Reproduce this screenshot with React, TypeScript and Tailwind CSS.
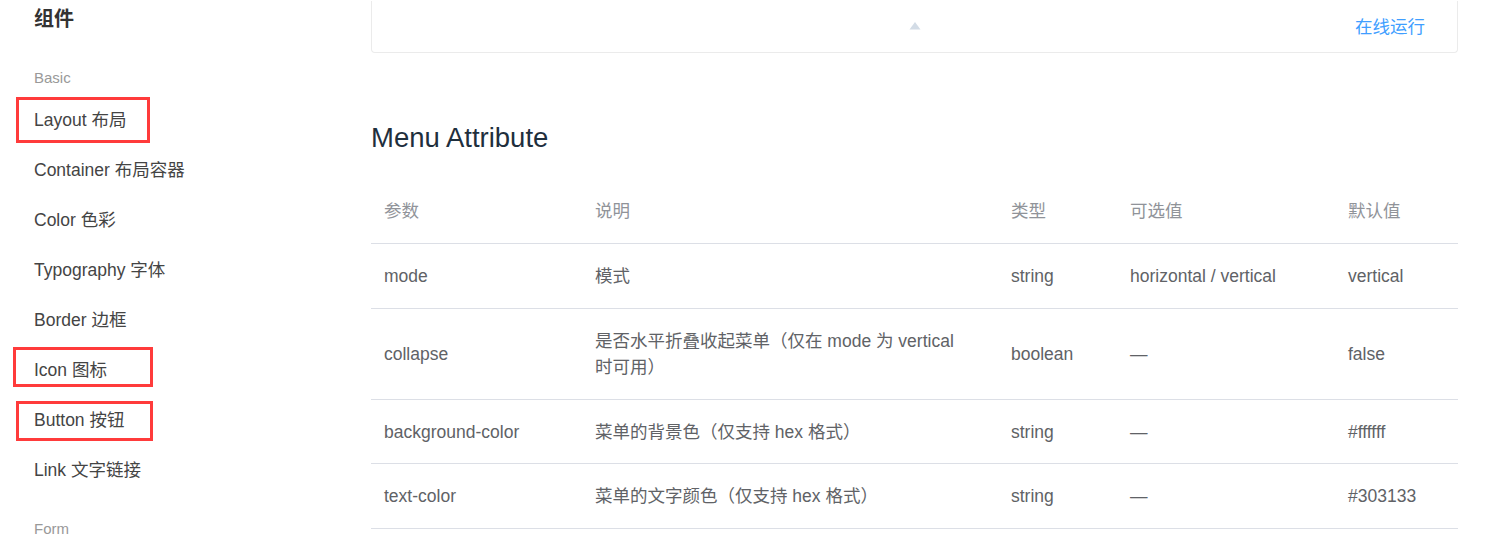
import React from "react";

const font = { fontFamily: '"Liberation Sans", "Noto Sans CJK SC", sans-serif' };

const basic = [
  "Layout 布局",
  "Container 布局容器",
  "Color 色彩",
  "Typography 字体",
  "Border 边框",
  "Icon 图标",
  "Button 按钮",
  "Link 文字链接",
];

type Row = { name: string; desc: React.ReactNode; type: string; options: string; def: string; pad: string };

const rows: Row[] = [
  { name: "mode", desc: "模式", type: "string", options: "horizontal / vertical", def: "vertical", pad: "py-[19px]" },
  {
    name: "collapse",
    desc: (
      <>
        是否水平折叠收起菜单（仅在 mode 为 vertical
        <br />
        时可用）
      </>
    ),
    type: "boolean",
    options: "—",
    def: "false",
    pad: "py-[19px]",
  },
  { name: "background-color", desc: "菜单的背景色（仅支持 hex 格式）", type: "string", options: "—", def: "#ffffff", pad: "pt-[19px] pb-[18px]" },
  { name: "text-color", desc: "菜单的文字颜色（仅支持 hex 格式）", type: "string", options: "—", def: "#303133", pad: "py-[19px]" },
];

function Sidebar() {
  return (
    <aside className="relative w-[371px] shrink-0 pl-[34px]">
      <div className="h-[36px] text-[20px] font-bold leading-[36px] text-[#333]">组件</div>
      <div className="mt-[24px] h-[34px] text-[15px] leading-[33px] text-[#999]">Basic</div>
      <ul>
        {basic.map((item) => (
          <li key={item} className="h-[50px] text-[17.5px] leading-[50px] text-[#444]">
            {item}
          </li>
        ))}
      </ul>
      <div className="mt-[17px] h-[33px] text-[15px] leading-[33px] text-[#999]">Form</div>

      {/* red annotation boxes */}
      <div className="absolute left-[16px] top-[96px] h-[46px] w-[134px] border-[3px] border-[#ff3b3b]" />
      <div className="absolute left-[13px] top-[346px] h-[40px] w-[140px] border-[3px] border-[#ff3b3b]" />
      <div className="absolute left-[16px] top-[400px] h-[40px] w-[137px] border-[3px] border-[#ff3b3b]" />
    </aside>
  );
}

function DemoControl() {
  return (
    <div className="relative flex h-[52px] items-center justify-center rounded-b-[4px] border-x border-b border-[#ebebeb]">
      <svg width="12" height="8" viewBox="0 0 12 8" className="mt-[-2px]">
        <path d="M6 0 L11.5 7.5 L0.5 7.5 Z" fill="#d3dce6" />
      </svg>
      <span className="absolute right-[32px] top-[13px] text-[17.5px] leading-[26px] text-[#409eff]">在线运行</span>
    </div>
  );
}

export default function App() {
  return (
    <div className="flex h-[540px] overflow-hidden bg-white pt-[1px]" style={font}>
      <Sidebar />
      <main className="w-[1087px] shrink-0">
        <DemoControl />
        <h3 className="mt-[69px] mb-[25px] text-[27.5px] font-normal leading-[32px] text-[#1f2f3d]">Menu Attribute</h3>
        <table className="w-full table-fixed border-collapse text-[17.5px] leading-[26px]">
          <colgroup>
            <col className="w-[205px]" />
            <col className="w-[416px]" />
            <col className="w-[119px]" />
            <col className="w-[218px]" />
            <col />
          </colgroup>
          <thead>
            <tr className="border-b border-[#dcdfe6] text-left text-[#909399]">
              <th className="h-[64px] pl-[13px] font-normal">参数</th>
              <th className="pl-[19px] font-normal">说明</th>
              <th className="pl-[19px] font-normal">类型</th>
              <th className="pl-[19px] font-normal">可选值</th>
              <th className="pl-[19px] font-normal">默认值</th>
            </tr>
          </thead>
          <tbody className="text-[#606266]">
            {rows.map((r) => (
              <tr key={r.name} className="border-b border-[#dcdfe6]">
                <td className={`${r.pad} pl-[13px]`}>{r.name}</td>
                <td className={`${r.pad} pl-[19px]`}>{r.desc}</td>
                <td className={`${r.pad} pl-[19px]`}>{r.type}</td>
                <td className={`${r.pad} pl-[19px]`}>{r.options}</td>
                <td className={`${r.pad} pl-[19px]`}>{r.def}</td>
              </tr>
            ))}
          </tbody>
        </table>
      </main>
    </div>
  );
}
